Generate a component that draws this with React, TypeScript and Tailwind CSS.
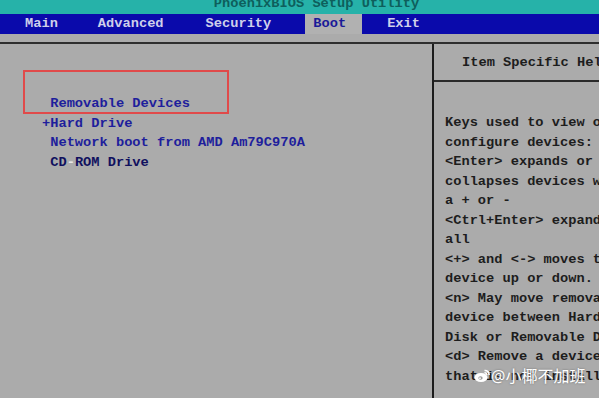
const mono = { fontFamily: '"Liberation Mono", "DejaVu Sans Mono", monospace' }

const menu = [
  { label: 'Main', ml: 'ml-[25px]' },
  { label: 'Advanced', ml: 'ml-[40px]' },
  { label: 'Security', ml: 'ml-[42px]' },
]

const helpLines = [
  'Keys used to view or',
  'configure devices:',
  '<Enter> expands or',
  'collapses devices with',
  'a + or -',
  '<Ctrl+Enter> expands',
  'all',
  '<+> and <-> moves the',
  'device up or down.',
  '<n> May move removable',
  'device between Hard',
  'Disk or Removable Disk',
  '<d> Remove a device',
  'that is not installed.',
]

function WeiboIcon() {
  return (
    <svg width="16" height="14" viewBox="0 0 16 14" className="mr-[1px]">
      <ellipse cx="7" cy="8.5" rx="6.5" ry="4.6" fill="#fff" />
      <ellipse cx="6.5" cy="9" rx="2.2" ry="1.8" fill="#9a9a9a" />
      <circle cx="6" cy="9.2" r="0.9" fill="#fff" />
      <path d="M10.5 1.5 A4 4 0 0 1 15 6" stroke="#fff" strokeWidth="1.6" fill="none" />
      <path d="M10.5 3.8 A2 2 0 0 1 12.8 6" stroke="#fff" strokeWidth="1.4" fill="none" />
    </svg>
  )
}

export default function App() {
  return (
    <div
      className="relative w-[599px] h-[398px] overflow-hidden bg-[#ababab] text-[13.7px] font-bold"
      style={mono}
    >
      {/* title strip */}
      <div className="h-[14px] bg-[#26b2a9] overflow-hidden flex justify-center">
        <div className="leading-[14px] -mt-[3px] ml-[34px] text-[#0e5f5c] whitespace-pre">
          PhoenixBIOS Setup Utility
        </div>
      </div>

      {/* menu bar */}
      <div className="h-[20px] bg-[#0a0aab] flex items-stretch text-[#cfcfea] leading-[20px]">
        {menu.map(m => (
          <div key={m.label} className={m.ml}>
            {m.label}
          </div>
        ))}
        <div className="ml-[34px] bg-[#b1b1b1] text-[#1a1a98] pl-[8px] pr-[16px]">Boot</div>
        <div className="ml-[25px]">Exit</div>
      </div>

      <div className="h-[10px] border-b-2 border-[#2e2e2e]" />

      <div className="flex h-[354px]">
        {/* boot order list */}
        <div className="w-[434px] shrink-0 border-r-2 border-[#1c1c1c] pt-[50px] pl-[42px] leading-[19.6px] text-[#1e1e9c] whitespace-pre">
          <div> Removable Devices</div>
          <div>+Hard Drive</div>
          <div> Network boot from AMD Am79C970A</div>
          <div className="text-[#10105e] font-black">
            {' '}CD<span className="text-[#e8e8e8]">-</span>ROM Drive
          </div>
        </div>

        {/* help panel */}
        <div className="flex-1 min-w-0 overflow-hidden text-[#1d1d1d] whitespace-pre">
          <div className="h-[38px] border-b-2 border-[#2a2a2a] pl-[28px] leading-[38px]">
            Item Specific Help
          </div>
          <div className="pt-[31px] pl-[11px] leading-[19.5px]">
            {helpLines.map((l, i) => (
              <div key={i}>{l}</div>
            ))}
          </div>
        </div>
      </div>

      {/* annotation box */}
      <div className="absolute left-[23px] top-[70px] w-[206px] h-[44px] border-2 border-[#e04a4a]" />

      {/* watermark */}
      <div
        className="absolute left-[474px] top-[366px] flex items-center text-white text-[16px] font-normal leading-[20px] [text-shadow:0_0_2px_#666]"
        style={{ fontFamily: '"Noto Sans", "Noto Sans CJK SC", sans-serif' }}
      >
        <WeiboIcon />
        <span>@小椰不加班</span>
      </div>
    </div>
  )
}
